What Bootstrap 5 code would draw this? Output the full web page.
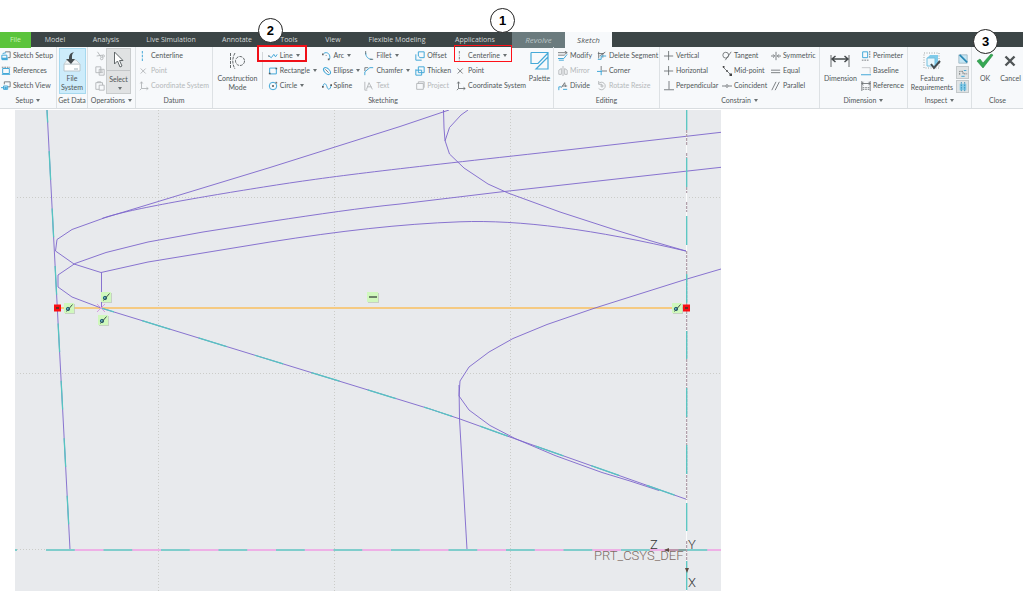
<!DOCTYPE html>
<html lang="en">
<head>
<meta charset="utf-8">
<meta name="viewport" content="width=device-width, initial-scale=1">
<title>Sketch</title>
<link href="https://cdn.jsdelivr.net/npm/bootstrap@5.3.0/dist/css/bootstrap.min.css" rel="stylesheet">
<style>
body{font-family:"Open Sans","Noto Sans",sans-serif;font-size:7px;line-height:9px;color:#505658;background:#fff}
button{font:inherit;color:inherit;background:none;border:0;padding:0;white-space:nowrap}
svg{flex:none;display:block}
.i10{width:10px;height:10px}
.k{fill:none;stroke:#666b6d;stroke-width:1}
.b{fill:none;stroke:#45a9d8;stroke-width:1.2}
.app-top{padding-top:32px}
.tabs{display:grid;grid-template-columns:31fr 48fr 54fr 76fr 56fr 48fr 40fr 88fr 68fr 3fr 53fr 47fr 411fr;height:15px;background:#3c4546}
.tabs a{color:#d3d8d9;text-decoration:none;text-align:center;line-height:16px;white-space:nowrap;min-width:0}
.tabs .file{background:#5bc43c;color:#c9f2b9}
.tabs .rev{background:#6b7b7e;color:#bcc6c8;font-style:italic;font-size:8px;grid-column:11}
.tabs .act{background:#f7f9fb;color:#505658;font-style:italic;font-size:8px}
.ribbon{display:grid;grid-template-columns:57fr 31fr 48fr 77fr 341fr 106fr 160fr 88fr 64fr 51fr;background:#f7f9fb;border-bottom:1px solid #d9dde0;font-family:Lato,"Open Sans",sans-serif}
.grp{min-width:0;display:flex;flex-direction:column;border-right:1px solid #dde1e4}
.grp:last-child{border-right:0}
.body-row{display:grid;height:46px;padding-top:1px}
.grp-name{height:15px;line-height:15px;text-align:center}
.tool{display:flex;align-items:center;gap:2px;height:15px;position:relative}
.tool:disabled{color:#b4b8ba}
.tool:disabled svg{opacity:.5}
.dd::after{content:"";display:inline-block;border:2px solid transparent;border-top:3px solid #6a7072;border-bottom:0;margin-left:3px;vertical-align:1px}
.tool.dd::after{margin-left:1px}
.big{display:flex;flex-direction:column;align-items:center;justify-self:center;position:relative}
.big .pic{height:26px;display:flex;align-items:center}
.g-setup{grid-template-columns:1fr;padding-left:1px}
.g-ops{grid-template-columns:12fr 25fr;padding-left:7px;padding-right:4px}
.g-datum{grid-template-columns:1fr;padding-left:3px}
.g-sk{grid-template-columns:49fr 6fr 54fr 43fr 51fr 41fr 70fr 27fr}
.g-ed{grid-template-columns:39fr 62fr;padding-left:4px}
.g-con{grid-template-columns:58fr 49fr 48fr;padding-left:4px}
.g-dim{grid-template-columns:41fr 46fr}
.g-ins{grid-template-columns:48fr 15fr}
.g-close{grid-template-columns:26fr 25fr}
.hot{background:#cdecfb;border:1px solid #a6d9ef;width:27px;height:46px}
.hot .pic{height:25px}
.pressed{background:#e0e2e3;border:1px solid #c9cccd;width:25px;height:46px}
.pressed .pic{height:23px;width:100%;justify-content:center;border-bottom:1px solid #c3c6c8}
.vsep{border-left:1px solid #d3d7da;margin:4px 0}
.mini{display:flex;align-items:center;justify-content:center;width:13px;height:13px}
.mini.on{background:#e0e3e4;border:1px solid #c3c8ca}
.redbox{position:absolute;border:2px solid #f01018;pointer-events:none;z-index:2}
.step{position:absolute;width:25px;height:25px;border:1px solid #222;border-radius:50%;background:#fff;color:#000;font:bold 13px/23px "Liberation Sans",sans-serif;text-align:center;z-index:5}
.red-line{left:-11px;width:50px;top:-3px;height:17px}
.red-cl{left:-2px;width:58px;top:-3px;height:17px;border:1px solid #ff1018}
.step-2{left:-10px;top:-30px}
.step-1{left:34px;top:-40px}
.step-3{left:50%;margin-left:-12px;top:-19px}
.stage{display:grid;grid-template-columns:15fr 706fr 302fr;padding-top:1px}
.stage svg{grid-column:2;width:100%;height:auto;background:#e8eaed}
.v{fill:none;stroke:#7d66cc;stroke-width:1;stroke-opacity:.9}
.c{fill:none;stroke:#55c5c1;stroke-width:1.3}
.dot{stroke:#cbccc9;stroke-width:1;stroke-dasharray:1 2}
.ax{font-family:Roboto,sans-serif;font-size:13px;font-weight:300}
</style>
</head>
<body>
<svg width="0" height="0" class="position-absolute" aria-hidden="true"><defs>
<symbol id="setup" viewBox="0 0 12 12"><path class="k" d="M5 1h6v7H8"/><path class="b" d="M1 5h6v5H1zM2 3l4-1"/><path fill="#45a9d8" d="M1 8h7v3H1z"/></symbol>
<symbol id="refs" viewBox="0 0 12 12"><path class="b" d="M2 3h8v6H2zM1 10h10"/><path class="k" stroke-dasharray="2 1" d="M1 1.500h10"/></symbol>
<symbol id="view" viewBox="0 0 12 12"><path class="k" d="M4 4V1h7v6H8"/><path class="b" d="M3 6h5v4H3zM0 8h3"/><path fill="#45a9d8" d="M4 7h3v3H4z"/></symbol>
<symbol id="cut" viewBox="0 0 12 12"><path class="k" d="M3 1l4 6M2 6l7-1"/><circle class="k" cx="8" cy="9" r="1.5"/><circle class="k" cx="10" cy="6" r="1.3"/></symbol>
<symbol id="copy" viewBox="0 0 12 12"><path class="k" d="M1 1h6v7H1zM5 4h6v7H5zM6.500 6h3M6.500 8h3"/></symbol>
<symbol id="paste" viewBox="0 0 12 12"><path class="k" d="M5 10H1V2h8v3M3 2V1h4v1M5 5h6v6H5z"/></symbol>
<symbol id="cl" viewBox="0 0 12 12"><path class="k" stroke-dasharray="3 1.500 1 1.500" d="M4 0v12"/></symbol>
<symbol id="clb" viewBox="0 0 12 12"><path class="b" stroke-dasharray="3 1.500" d="M4 0v12"/></symbol>
<symbol id="pt" viewBox="0 0 12 12"><path class="k" d="M2 3l6 6M8 3L2 9"/></symbol>
<symbol id="cs" viewBox="0 0 12 12"><path class="k" d="M3 1v8h8M3 9L1 11M1.500 3L3 1l1.500 2M9 7.500L11 9l-2 1.500"/></symbol>
<symbol id="line" viewBox="0 0 12 12"><path class="b" d="M1 6l3 2 3-4 2 3 2-3"/><circle cx="1" cy="6" r="1" fill="#777"/></symbol>
<symbol id="rect" viewBox="0 0 12 12"><path class="b" d="M2 2.500h8v7H2z"/><path fill="#555" d="M1 8h2v2H1zM9 2h2v2H9z"/></symbol>
<symbol id="circ" viewBox="0 0 12 12"><circle class="b" cx="6" cy="6" r="4.500"/><circle cx="6" cy="6" r="1.200" fill="#555"/><path d="M9 1h2v2H9z" fill="#777"/></symbol>
<symbol id="arc" viewBox="0 0 12 12"><path class="b" d="M2 3c4-3 9 1 7 7"/><path fill="#666" d="M0 3h2v2H0zM7 9h2v2H7z"/><path class="k" d="M5 5v1"/></symbol>
<symbol id="ell" viewBox="0 0 12 12"><ellipse class="b" cx="6" cy="6" rx="5" ry="3" transform="rotate(45 6 6)"/><path class="k" d="M4 4l4 4"/></symbol>
<symbol id="spl" viewBox="0 0 12 12"><path class="b" d="M1 7c1-6 4-4 5 0s4 4 5-2"/><path fill="#555" d="M0 6h2v2H0zM10 4h2v2h-2z"/></symbol>
<symbol id="fil" viewBox="0 0 12 12"><path class="b" d="M2 2c0 5 3 8 8 8"/><path class="k" d="M2 0v4M7 10h4"/></symbol>
<symbol id="cha" viewBox="0 0 12 12"><path class="b" d="M1 11V7l6-5h4"/><path class="k" d="M1 6V2h4"/></symbol>
<symbol id="text" viewBox="0 0 12 12"><path class="k" d="M1 1v10M3 10l3-8 4 8M4 7h5M1 11h3"/></symbol>
<symbol id="off" viewBox="0 0 12 12"><path class="b" d="M4 1h7v7H6L4 6zM1 4v7h7"/></symbol>
<symbol id="thk" viewBox="0 0 12 12"><path class="b" d="M4 1h7v7H4zM1 4v7h7V5H1"/></symbol>
<symbol id="prj" viewBox="0 0 12 12"><path class="k" d="M2 3h8v7H2zM4 3V1h7v7"/></symbol>
<symbol id="mod" viewBox="0 0 12 12"><path class="k" d="M0 2h11M0 5h8M8 0l3 2-3 2"/><path class="b" d="M0 9h7l4-5M1 11h6"/></symbol>
<symbol id="mir" viewBox="0 0 12 12"><path class="k" stroke-width="1.300" d="M6 0v12M4 3L1 5v5h3M8 3l3 2v5H8M4 3v7M8 3v7"/></symbol>
<symbol id="div" viewBox="0 0 12 12"><path class="b" d="M1 11V7h3M6 10h5"/><path class="k" d="M4 8l4-6 1 5M5 6h6"/></symbol>
<symbol id="del" viewBox="0 0 12 12"><path class="k" d="M1 3h7l2-2M3 6l6-4M2 1v8M7 3v5"/><path class="b" d="M1 10h4V6h6"/></symbol>
<symbol id="cor" viewBox="0 0 12 12"><path class="k" d="M5 0v5M6 6h6" stroke-width="1.300"/><path class="b" d="M5 5v6M0 6.500h6"/></symbol>
<symbol id="rot" viewBox="0 0 12 12"><path class="k" stroke-width="1.300" d="M2 3a4.500 4.500 0 1 1 0 6M2 0v4h4M4 6h4M6 4v4"/></symbol>
<symbol id="ver" viewBox="0 0 12 12"><path class="k" stroke-width="1.300" d="M5.500 0v11M0 6h11"/></symbol>
<symbol id="per" viewBox="0 0 12 12"><path class="k" stroke-width="1.500" d="M6 0v10M0 10.500h12"/></symbol>
<symbol id="tan" viewBox="0 0 12 12"><circle class="k" cx="4.500" cy="5" r="3.500"/><path class="k" stroke-width="1.300" d="M4 11L11 1"/></symbol>
<symbol id="mid" viewBox="0 0 12 12"><path class="k" stroke-width="1.300" d="M1 1l10 10"/><path d="M1 0h2v2H1zM5 5h2v2H5zM9 9h3v3H9z" fill="#444"/></symbol>
<symbol id="coi" viewBox="0 0 12 12"><path class="k" d="M0 6h4M8 6h4"/><circle class="k" cx="6" cy="6" r="1.500"/></symbol>
<symbol id="sym" viewBox="0 0 12 12"><path class="k" stroke-width="1.400" d="M0 6h4M8 6h4M6 1v10M2.500 4l2 2-2 2M9.500 4l-2 2 2 2"/></symbol>
<symbol id="equ" viewBox="0 0 12 12"><path class="k" stroke-width="1.500" d="M0 5h11M0 8h11"/></symbol>
<symbol id="par" viewBox="0 0 12 12"><path class="k" stroke-width="1.400" d="M1 11L6 1M5 11l5-10"/></symbol>
<symbol id="peri" viewBox="0 0 12 12"><path class="b" d="M2 1h6v7H2z"/><path class="k" d="M10.500 0v8M1 11h8" stroke-dasharray="2 1"/></symbol>
<symbol id="base" viewBox="0 0 12 12"><path class="k" opacity=".4" d="M1 2h10v7"/><path class="b" stroke-width="2" d="M0 10.500h12"/></symbol>
<symbol id="ref" viewBox="0 0 12 12"><path class="k" d="M1 0v12M11 0v12M1 3h10M3 1L1 3l2 2M9 1l2 2-2 2"/><path class="k" stroke-width="1.500" d="M2 8h8M2 10h8" stroke-dasharray="2 1"/></symbol>
<g id="pin"><rect width="10" height="10" fill="#b9c4b4" x="1" y="1" opacity=".7"/><rect width="10" height="10" fill="#d0f8bd"/><circle cx="4" cy="6" r="1.700" fill="#65b5d0" stroke="#286275"/><path d="M2.500 8.500L8.500 1.500" stroke="#405348" stroke-width="1"/></g>
</defs></svg>

<header class="app-top">
<nav class="tabs" aria-label="Ribbon tabs">
<a class="file" href="#">File</a><a href="#">Model</a><a href="#">Analysis</a><a href="#">Live Simulation</a><a href="#">Annotate</a><a href="#">Tools</a><a href="#">View</a><a href="#">Flexible Modeling</a><a href="#">Applications</a><a class="rev" href="#">Revolve</a><a class="act" href="#" aria-current="page">Sketch</a>
</nav>
<div class="ribbon">
<section class="grp"><div class="body-row g-setup"><div>
<button class="tool"><svg class="i10"><use href="#setup"/></svg>Sketch Setup</button>
<button class="tool"><svg class="i10"><use href="#refs"/></svg>References</button>
<button class="tool"><svg class="i10"><use href="#view"/></svg>Sketch View</button></div></div>
<button class="grp-name dd">Setup</button></section>

<section class="grp"><div class="body-row">
<button class="big hot"><span class="pic"><svg width="20" height="22" viewBox="0 0 20 22"><path d="M2 13h16v7H2z" fill="#fff" stroke="#bac6cc"/><path d="M5 9h9l4 4H2z" fill="#f1f5f7" stroke="#c8d1d5"/><path d="M12 18h4" stroke="#9db1ba"/><path d="M12 1C8 2 7 4 7 8H4l5 5 4-5h-3c0-4 0-5 2-7z" fill="#454c4f"/></svg></span><span>File</span><span>System</span></button></div>
<div class="grp-name text-nowrap">Get Data</div></section>

<section class="grp"><div class="body-row g-ops"><div>
<button class="tool" disabled aria-label="Cut"><svg class="i10"><use href="#cut"/></svg></button>
<button class="tool" disabled aria-label="Copy"><svg class="i10"><use href="#copy"/></svg></button>
<button class="tool" disabled aria-label="Paste"><svg class="i10"><use href="#paste"/></svg></button></div>
<button class="big pressed"><span class="pic"><svg width="11" height="17" viewBox="0 0 11 17"><path d="M1.500 1v12l3-3 2.500 6 2-1-2.500-5.500H10z" fill="#fff" stroke="#62686a"/></svg></span><span class="mt-1">Select</span><span class="dd"></span></button></div>
<button class="grp-name dd">Operations</button></section>

<section class="grp"><div class="body-row g-datum"><div>
<button class="tool"><svg class="i10"><use href="#clb"/></svg>Centerline</button>
<button class="tool" disabled><svg class="i10"><use href="#pt"/></svg>Point</button>
<button class="tool" disabled><svg class="i10"><use href="#cs"/></svg>Coordinate System</button></div></div>
<div class="grp-name">Datum</div></section>

<section class="grp"><div class="body-row g-sk">
<button class="big"><span class="pic"><svg width="17" height="18" viewBox="0 0 17 18"><path class="k" stroke-dasharray="3 1" d="M1.500 1v16M6 1C3 6 3 12 6 17"/><circle class="k" cx="11" cy="9" r="4.500" stroke-dasharray="3 1"/></svg></span><span>Construction</span><span>Mode</span></button>
<div class="vsep"></div>
<div><button class="tool dd"><svg class="i10"><use href="#line"/></svg>Line<span class="redbox red-line"></span><span class="step step-2">2</span></button>
<button class="tool dd"><svg class="i10"><use href="#rect"/></svg>Rectangle</button>
<button class="tool dd"><svg class="i10"><use href="#circ"/></svg>Circle</button></div>
<div><button class="tool dd"><svg class="i10"><use href="#arc"/></svg>Arc</button>
<button class="tool dd"><svg class="i10"><use href="#ell"/></svg>Ellipse</button>
<button class="tool"><svg class="i10"><use href="#spl"/></svg>Spline</button></div>
<div><button class="tool dd"><svg class="i10"><use href="#fil"/></svg>Fillet</button>
<button class="tool dd"><svg class="i10"><use href="#cha"/></svg>Chamfer</button>
<button class="tool" disabled><svg class="i10"><use href="#text"/></svg>Text</button></div>
<div><button class="tool"><svg class="i10"><use href="#off"/></svg>Offset</button>
<button class="tool"><svg class="i10"><use href="#thk"/></svg>Thicken</button>
<button class="tool" disabled><svg class="i10"><use href="#prj"/></svg>Project</button></div>
<div><button class="tool dd"><svg class="i10"><use href="#cl"/></svg>Centerline<span class="redbox red-cl"></span><span class="step step-1">1</span></button>
<button class="tool"><svg class="i10"><use href="#pt"/></svg>Point</button>
<button class="tool"><svg class="i10"><use href="#cs"/></svg>Coordinate System</button></div>
<button class="big"><span class="pic"><svg width="19" height="20" viewBox="0 0 19 20"><path class="b" d="M1 1.500h17v10M1 1.500v11h7L18 2M18 6v12H6l12-12"/></svg></span><span>Palette</span></button></div>
<div class="grp-name">Sketching</div></section>

<section class="grp"><div class="body-row g-ed"><div>
<button class="tool"><svg class="i10"><use href="#mod"/></svg>Modify</button>
<button class="tool" disabled><svg class="i10"><use href="#mir"/></svg>Mirror</button>
<button class="tool"><svg class="i10"><use href="#div"/></svg>Divide</button></div>
<div><button class="tool"><svg class="i10"><use href="#del"/></svg>Delete Segment</button>
<button class="tool"><svg class="i10"><use href="#cor"/></svg>Corner</button>
<button class="tool" disabled><svg class="i10"><use href="#rot"/></svg>Rotate Resize</button></div></div>
<div class="grp-name">Editing</div></section>

<section class="grp"><div class="body-row g-con"><div>
<button class="tool"><svg class="i10"><use href="#ver"/></svg>Vertical</button>
<button class="tool"><svg class="i10"><use href="#ver"/></svg>Horizontal</button>
<button class="tool"><svg class="i10"><use href="#per"/></svg>Perpendicular</button></div>
<div><button class="tool"><svg class="i10"><use href="#tan"/></svg>Tangent</button>
<button class="tool"><svg class="i10"><use href="#mid"/></svg>Mid-point</button>
<button class="tool"><svg class="i10"><use href="#coi"/></svg>Coincident</button></div>
<div><button class="tool"><svg class="i10"><use href="#sym"/></svg>Symmetric</button>
<button class="tool"><svg class="i10"><use href="#equ"/></svg>Equal</button>
<button class="tool"><svg class="i10"><use href="#par"/></svg>Parallel</button></div></div>
<button class="grp-name dd">Constrain</button></section>

<section class="grp"><div class="body-row g-dim">
<button class="big"><span class="pic"><svg width="20" height="14" viewBox="0 0 20 14"><path class="k" d="M1 1v12M19 1v12"/><path d="M2 5h16M5.500 2L2 5l3.500 3M14.500 2L18 5l-3.500 3" fill="none" stroke="#44494b" stroke-width="1.500"/></svg></span><span>Dimension</span></button>
<div><button class="tool"><svg class="i10"><use href="#peri"/></svg>Perimeter</button>
<button class="tool"><svg class="i10"><use href="#base"/></svg>Baseline</button>
<button class="tool"><svg class="i10"><use href="#ref"/></svg>Reference</button></div></div>
<button class="grp-name dd">Dimension</button></section>

<section class="grp"><div class="body-row g-ins">
<button class="big"><span class="pic"><svg width="18" height="18" viewBox="0 0 18 18"><path class="k" stroke-dasharray="1 1.500" opacity=".6" d="M1 1h15v15H1z"/><path d="M4 6l3-3h8v8l-3 3H4z" fill="#80cbea"/><path d="M4 6h8v8H4z" fill="#e9f7fc" stroke="#72bfdf"/><path d="M8 12l3 4 6-7" fill="none" stroke="#444b4e" stroke-width="2"/></svg></span><span>Feature</span><span>Requirements</span></button>
<div class="d-flex flex-column justify-content-between pt-1">
<button class="mini" aria-label="Shade closed loops"><svg class="i10" viewBox="0 0 12 12"><path d="M1 1h10v10H1z" fill="#c5e7f5" stroke="#9ab5c0"/><path d="M2 1l9 9" stroke="#2987b4" stroke-width="2"/></svg></button>
<button class="mini on" aria-label="Highlight open ends"><svg class="i10" viewBox="0 0 12 12"><path class="k" stroke-dasharray="2 1" d="M2 8V4h4v3h5"/><path class="b" d="M7 3h3M4 10h4"/></svg></button>
<button class="mini on" aria-label="Overlapping geometry"><svg class="i10" viewBox="0 0 12 12"><path d="M2 2h8v8H2z" fill="#86cbe7"/><path d="M4 0v12M8 0v12" stroke="#2d8bb7" stroke-dasharray="2 1"/></svg></button></div></div>
<button class="grp-name dd">Inspect</button></section>

<section class="grp"><div class="body-row g-close">
<button class="big"><span class="pic"><svg width="18" height="16" viewBox="0 0 18 16"><path d="M1 8l3-2 3 4 8-9 2 1L7 15z" fill="#35a853" stroke="#278c43" stroke-width=".6"/></svg></span><span>OK</span><span class="step step-3">3</span></button>
<button class="big"><span class="pic"><svg width="12" height="12" viewBox="0 0 12 12"><path d="M1.500 1.500l9 9M10.500 1.500l-9 9" stroke="#505557" stroke-width="2.400"/></svg></span><span>Cancel</span></button></div>
<div class="grp-name">Close</div></section>
</div>
</header>

<main class="stage">
<svg viewBox="15 110 706 481" role="img" aria-label="Sketch of the part section">
<path class="dot" fill="none" d="M158.500 110V591M334.500 110V591M510.500 110V591M17 197.500H721M17 373.500H721M17 549.500H46"/>
<path d="M57 308H687" stroke="#f5ca82" stroke-width="2"/>
<g stroke-linejoin="round">
<path class="v" d="M449 110L400 126.500L270 167.500L104 218L72 229.500L57 239.500L55.500 251L74 264L101 272.500"/>
<path class="v" d="M102 218.500C125 210 200 197 270 186S400 168.500 573 149.300L721 132.300"/>
<path class="v" d="M101 308L72 297L58 287V275L75 263.500L106 252.500L148 242L203 232L270 221.500C320 214 360 208 400 204L500 192L721 167.300"/>
<path class="v" d="M101 272.500L148 262L270 242C340 231 400 224 460 221.800S595 229.500 687 251.300"/>
<path class="v" d="M443.500 110L444 128L445 140.500L449.500 154L464 168L488 184L508 193L560 212L617 230.500L653 241.500L687 251.300M468 110L461 115L449.500 127.500L445 141"/>
<path class="v" d="M101.500 272.500V308"/>
<path class="v" d="M721 269L687 279L633 296L595 308L547 324.500L513 338.500L489 352L469 367L460 381L459 396L469 410L490 425.500L515 438.500L555 455.500L602 472.500L630 481L659 490.500"/>
<path class="v" d="M459 385L459.500 419L467 549.500"/>
<path class="v" d="M47 110L57.300 308L70 549.500"/>
<path class="c" stroke-dasharray="28.750" stroke-dashoffset="16.300" d="M47 110L57.300 308L70 549.500"/>
<path class="v" d="M101 308L430 409L460 419L510 437L687 499.500"/>
<path class="c" stroke-dasharray="29.500" stroke-dashoffset="16" d="M101 308L430 409L460 419L510 437L687 499.500"/>
</g>
<path d="M46 550H721" stroke="#eeb0e6" stroke-width="2"/>
<path d="M46 550H721M15 550H17" stroke="#7fcdcc" stroke-width="2" stroke-dasharray="28.750"/>
<path d="M686.500 110V591" stroke="#fbfbfb"/>
<path d="M686.700 130V145M686.700 153V158M686.700 187V193M686.700 202V212M686.700 251V500M686.700 541V561" stroke="#a08a98" stroke-dasharray="3 1"/>
<path class="c" d="M686.700 110V130M686.700 158V187M686.700 216V245M686.700 274V303M686.700 331V359M686.700 388V417M686.700 445V474M686.700 503V531M686.700 561V590"/>
<path d="M97 304l8 8M105 304l-8 8" stroke="#d49be0"/>
<path d="M665 550H686" stroke="#8c7d75"/><path d="M664 550l5-2v4zM685 568h4l-2 5z" fill="#5f4d42"/>
<use href="#pin" x="64" y="303"/><use href="#pin" x="101" y="292"/><use href="#pin" x="98" y="315"/><use href="#pin" x="672" y="303"/>
<path d="M368 293h11v10h-11z" fill="#b9c4b4" opacity=".7"/><path d="M367 292h11v10h-11z" fill="#d0f8bd"/><path d="M369 297h8" stroke="#39443c" stroke-width="1.300"/>
<path d="M54 304.500h7v7h-7zM683 304.500h7v7h-7z" fill="#fb0d12"/><path d="M56 307h3v2h-3zM685 307h3v2h-3z" fill="#6b3026"/>
<g class="ax"><text x="594" y="560" fill="#7d6a64">PRT_CSYS_DEF</text><text x="650" y="549" fill="#333">Z</text><text x="688" y="549" fill="#333">Y</text><text x="688" y="587" fill="#333">X</text></g>
</svg>
</main>
<script src="https://cdn.jsdelivr.net/npm/bootstrap@5.3.0/dist/js/bootstrap.bundle.min.js"></script>
</body>
</html>
